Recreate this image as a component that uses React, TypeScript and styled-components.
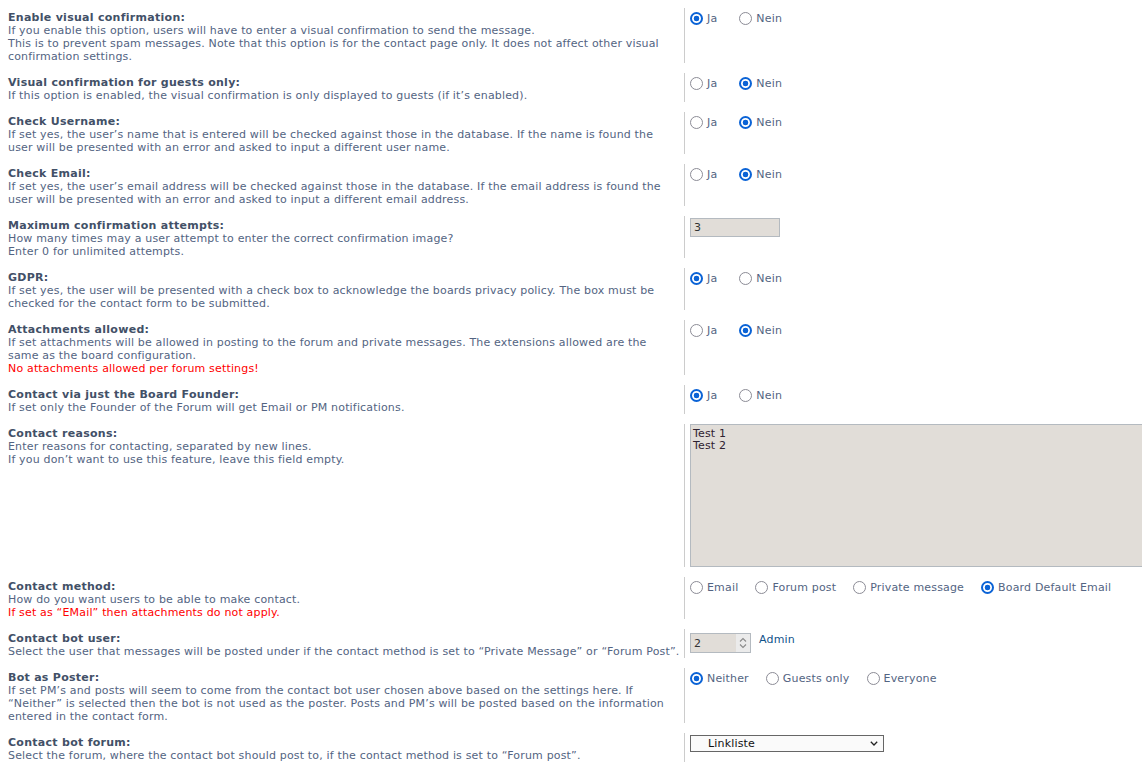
import React from 'react';
import styled, { createGlobalStyle } from 'styled-components';

const GlobalStyle = createGlobalStyle`
  html, body {
    margin: 0;
    padding: 0;
    background: #ffffff;
    overflow: hidden;
  }
  body {
    font-family: Verdana, "DejaVu Sans", sans-serif;
    font-size: 11px;
    letter-spacing: 0.17px;
    color: #536482;
  }
`;

type Line = string | { text: string; error: true };

type Control =
  | { kind: 'yesno'; value: 'yes' | 'no' }
  | { kind: 'radios'; options: string[]; checked: number }
  | { kind: 'text'; value: string }
  | { kind: 'textarea'; value: string }
  | { kind: 'user'; value: string; name: string }
  | { kind: 'select'; value: string };

type Setting = {
  id: string;
  title: string;
  explain: Line[];
  control: Control;
};

const settings: Setting[] = [
  {
    id: 'visual_confirmation',
    title: 'Enable visual confirmation:',
    explain: [
      'If you enable this option, users will have to enter a visual confirmation to send the message.',
      'This is to prevent spam messages. Note that this option is for the contact page only. It does not affect other visual',
      'confirmation settings.',
    ],
    control: { kind: 'yesno', value: 'yes' },
  },
  {
    id: 'confirm_guests',
    title: 'Visual confirmation for guests only:',
    explain: [
      'If this option is enabled, the visual confirmation is only displayed to guests (if it’s enabled).',
    ],
    control: { kind: 'yesno', value: 'no' },
  },
  {
    id: 'username_chk',
    title: 'Check Username:',
    explain: [
      'If set yes, the user’s name that is entered will be checked against those in the database. If the name is found the',
      'user will be presented with an error and asked to input a different user name.',
    ],
    control: { kind: 'yesno', value: 'no' },
  },
  {
    id: 'email_chk',
    title: 'Check Email:',
    explain: [
      'If set yes, the user’s email address will be checked against those in the database. If the email address is found the',
      'user will be presented with an error and asked to input a different email address.',
    ],
    control: { kind: 'yesno', value: 'no' },
  },
  {
    id: 'max_attempts',
    title: 'Maximum confirmation attempts:',
    explain: [
      'How many times may a user attempt to enter the correct confirmation image?',
      'Enter 0 for unlimited attempts.',
    ],
    control: { kind: 'text', value: '3' },
  },
  {
    id: 'gdpr',
    title: 'GDPR:',
    explain: [
      'If set yes, the user will be presented with a check box to acknowledge the boards privacy policy. The box must be',
      'checked for the contact form to be submitted.',
    ],
    control: { kind: 'yesno', value: 'yes' },
  },
  {
    id: 'attach_allowed',
    title: 'Attachments allowed:',
    explain: [
      'If set attachments will be allowed in posting to the forum and private messages. The extensions allowed are the',
      'same as the board configuration.',
      { text: 'No attachments allowed per forum settings!', error: true },
    ],
    control: { kind: 'yesno', value: 'no' },
  },
  {
    id: 'founder_only',
    title: 'Contact via just the Board Founder:',
    explain: ['If set only the Founder of the Forum will get Email or PM notifications.'],
    control: { kind: 'yesno', value: 'yes' },
  },
  {
    id: 'reasons',
    title: 'Contact reasons:',
    explain: [
      'Enter reasons for contacting, separated by new lines.',
      'If you don’t want to use this feature, leave this field empty.',
    ],
    control: { kind: 'textarea', value: 'Test 1\nTest 2' },
  },
  {
    id: 'method',
    title: 'Contact method:',
    explain: [
      'How do you want users to be able to make contact.',
      { text: 'If set as “EMail” then attachments do not apply.', error: true },
    ],
    control: {
      kind: 'radios',
      options: ['Email', 'Forum post', 'Private message', 'Board Default Email'],
      checked: 3,
    },
  },
  {
    id: 'bot_user',
    title: 'Contact bot user:',
    explain: [
      'Select the user that messages will be posted under if the contact method is set to “Private Message” or “Forum Post”.',
    ],
    control: { kind: 'user', value: '2', name: 'Admin' },
  },
  {
    id: 'bot_poster',
    title: 'Bot as Poster:',
    explain: [
      'If set PM’s and posts will seem to come from the contact bot user chosen above based on the settings here. If',
      '“Neither” is selected then the bot is not used as the poster. Posts and PM’s will be posted based on the information',
      'entered in the contact form.',
    ],
    control: { kind: 'radios', options: ['Neither', 'Guests only', 'Everyone'], checked: 0 },
  },
  {
    id: 'bot_forum',
    title: 'Contact bot forum:',
    explain: [
      'Select the forum, where the contact bot should post to, if the contact method is set to “Forum post”.',
    ],
    control: { kind: 'select', value: 'Linkliste' },
  },
];

const Page = styled.div`
  padding-top: 3px;
`;

const Row = styled.dl`
  display: flex;
  margin: 0;
  padding: 5px 0;
`;

const Term = styled.dt`
  box-sizing: border-box;
  width: 684px;
  flex-shrink: 0;
  padding: 3px 0 0 8px;
`;

const Title = styled.label`
  display: block;
  font-weight: bold;
  line-height: 13px;
  letter-spacing: 0.28px;
  color: #425067;
`;

const Explain = styled.span<{ $error?: boolean }>`
  display: block;
  line-height: 13px;
  white-space: nowrap;
  color: ${(p) => (p.$error ? '#ff0000' : '#536482')};
`;

const Def = styled.dd`
  flex: 1;
  min-width: 0;
  margin: 0;
  border-left: 1px solid #cccccc;
`;

const RadioGroup = styled.div`
  display: flex;
  align-items: center;
  margin-top: 4px;
`;

const RadioLabel = styled.label<{ $gap?: number }>`
  display: inline-flex;
  align-items: center;
  margin-right: ${(p) => p.$gap ?? 12}px;
  line-height: 13px;
  color: #536482;
  white-space: nowrap;
`;

const Radio = styled.input.attrs({ type: 'radio' })`
  box-sizing: border-box;
  appearance: none;
  width: 13px;
  height: 13px;
  margin: 0 4px 0 5px;
  border: 1.5px solid #8c8c96;
  border-radius: 50%;
  background: #ffffff;

  &:checked {
    border: 2px solid #0b63d6;
    background: radial-gradient(circle, #0b63d6 0 2.6px, #ffffff 3.1px);
  }
`;

const TextBox = styled.input`
  box-sizing: border-box;
  display: block;
  width: 90px;
  height: 19px;
  margin: 2px 0 0 5px;
  padding: 0 3px;
  border: 1px solid #b4bac0;
  background: #e1ddd8;
  font: 11px Verdana, "DejaVu Sans", sans-serif;
  color: #333333;
`;

const UserLine = styled.div`
  display: flex;
  align-items: flex-start;
  margin-top: 4px;
`;

const NumberField = styled.div`
  box-sizing: border-box;
  display: flex;
  width: 61px;
  height: 20px;
  margin-left: 5px;
  border: 1px solid #b4bac0;
  background: #e1ddd8;
`;

const NumberInput = styled.input`
  flex: 1;
  min-width: 0;
  padding: 0 3px;
  border: 0;
  background: transparent;
  font: 11px Verdana, "DejaVu Sans", sans-serif;
  color: #333333;
  outline: none;
`;

const Spinner = styled.div`
  display: flex;
  flex-direction: column;
  align-items: center;
  justify-content: center;
  gap: 2px;
  width: 14px;
  background: #ebebeb;
`;

const UserLink = styled.a`
  margin-left: 8px;
  line-height: 13px;
  color: #105289;
  text-decoration: none;
`;

const Reasons = styled.textarea`
  box-sizing: border-box;
  display: block;
  width: 470px;
  height: 143px;
  margin: 0 0 0 5px;
  padding: 3px 2px;
  border: 1px solid #b4bac0;
  background: #e1ddd8;
  font: 11px/12px Verdana, "DejaVu Sans", sans-serif;
  letter-spacing: 0.17px;
  color: #2e2230;
  resize: none;
  overflow: hidden;
`;

const SelectWrap = styled.div`
  position: relative;
  width: 194px;
  margin: 2px 0 0 5px;
`;

const ForumSelect = styled.select`
  box-sizing: border-box;
  display: block;
  width: 100%;
  height: 17px;
  padding: 0 0 0 17px;
  border: 1px solid #666666;
  border-radius: 0;
  appearance: none;
  background: #fafafa;
  font: 11px Verdana, "DejaVu Sans", sans-serif;
  letter-spacing: 0.17px;
  color: #111111;
`;

const Chevron = styled.svg`
  position: absolute;
  top: 6px;
  right: 6px;
  pointer-events: none;
`;

const renderControl = (id: string, control: Control) => {
  switch (control.kind) {
    case 'yesno':
      return (
        <RadioGroup>
          <RadioLabel $gap={17}>
            <Radio name={id} defaultChecked={control.value === 'yes'} />
            Ja
          </RadioLabel>
          <RadioLabel>
            <Radio name={id} defaultChecked={control.value === 'no'} />
            Nein
          </RadioLabel>
        </RadioGroup>
      );
    case 'radios':
      return (
        <RadioGroup>
          {control.options.map((option, i) => (
            <RadioLabel key={option}>
              <Radio name={id} defaultChecked={i === control.checked} />
              {option}
            </RadioLabel>
          ))}
        </RadioGroup>
      );
    case 'text':
      return <TextBox type="text" defaultValue={control.value} />;
    case 'textarea':
      return <Reasons defaultValue={control.value} />;
    case 'user':
      return (
        <UserLine>
          <NumberField>
            <NumberInput type="text" inputMode="numeric" defaultValue={control.value} />
            <Spinner>
              <svg width="8" height="5" viewBox="0 0 8 5">
                <polyline points="1,4.5 4,1.5 7,4.5" fill="none" stroke="#8a8a8a" strokeWidth="1.1" />
              </svg>
              <svg width="8" height="5" viewBox="0 0 8 5">
                <polyline points="1,0.5 4,3.5 7,0.5" fill="none" stroke="#8a8a8a" strokeWidth="1.1" />
              </svg>
            </Spinner>
          </NumberField>
          <UserLink href="#">{control.name}</UserLink>
        </UserLine>
      );
    case 'select':
      return (
        <SelectWrap>
          <ForumSelect defaultValue={control.value}>
            <option value={control.value}>{control.value}</option>
          </ForumSelect>
          <Chevron width="8" height="5" viewBox="0 0 8 5">
            <polyline points="0.8,0.8 4,4 7.2,0.8" fill="none" stroke="#222222" strokeWidth="1.3" />
          </Chevron>
        </SelectWrap>
      );
  }
};

const App = () => (
  <Page>
    <GlobalStyle />
    {settings.map((setting) => (
      <Row key={setting.id}>
        <Term>
          <Title htmlFor={setting.id}>{setting.title}</Title>
          {setting.explain.map((line, i) =>
            typeof line === 'string' ? (
              <Explain key={i}>{line}</Explain>
            ) : (
              <Explain key={i} $error>
                {line.text}
              </Explain>
            )
          )}
        </Term>
        <Def>{renderControl(setting.id, setting.control)}</Def>
      </Row>
    ))}
  </Page>
);

export default App;
